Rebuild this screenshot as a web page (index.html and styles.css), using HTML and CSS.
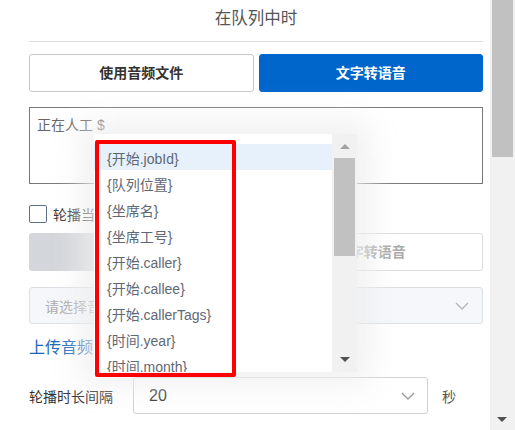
FILE: index.html
```html
<!DOCTYPE html>
<html lang="zh-CN">
<head>
    <meta charset="utf-8">
    <title>在队列中时</title>
    <link rel="stylesheet" href="styles.css">
</head>
<body>
<div class="page">
    <div class="main">
        <div class="title">在队列中时</div>

        <div class="seg">
            <div class="seg-btn">使用音频文件</div>
            <div class="seg-btn active">文字转语音</div>
        </div>

        <div class="text-box">正在人工 $</div>

        <div class="check-row">
            <span class="checkbox"></span>
            <span>轮播当前排队位置</span>
        </div>

        <div class="seg seg-disabled">
            <div class="seg-btn">使用音频文件</div>
            <div class="seg-btn">文字转语音</div>
        </div>

        <div class="select select-disabled">
            <span class="placeholder">请选择音频文件</span>
            <svg class="chevron" viewBox="0 0 14 8" width="14" height="8"><path d="M1 1l6 6 6-6" fill="none" stroke="#b5b5b5" stroke-width="1.3"/></svg>
        </div>

        <div class="link">上传音频文件</div>

        <div class="interval-row">
            <span class="interval-label">轮播时长间隔</span>
            <div class="select interval-select">
                <span class="value">20</span>
                <svg class="chevron" viewBox="0 0 14 8" width="14" height="8"><path d="M1 1l6 6 6-6" fill="none" stroke="#999" stroke-width="1.3"/></svg>
            </div>
            <span class="unit">秒</span>
        </div>

        <!-- variable picker dropdown -->
        <div class="picker">
            <ul class="picker-list">
                <li class="hover">{开始.jobId}</li>
                <li>{队列位置}</li>
                <li>{坐席名}</li>
                <li>{坐席工号}</li>
                <li>{开始.caller}</li>
                <li>{开始.callee}</li>
                <li>{开始.callerTags}</li>
                <li>{时间.year}</li>
                <li>{时间.month}</li>
            </ul>
            <div class="picker-bar">
                <span class="arrow-up light"></span>
                <span class="picker-thumb"></span>
                <span class="arrow-down"></span>
            </div>
        </div>
        <div class="mark"></div>
    </div>

    <div class="scrollbar">
        <span class="thumb"></span>
        <span class="arrow-down"></span>
    </div>
</div>
</body>
</html>
```

FILE: styles.css
```css
body {
    margin: 0;
    font-family: "Liberation Sans", "Noto Sans CJK SC", sans-serif;
    font-size: 14px;
    color: #333;
    background: #fff;
}

.page {
    display: flex;
    height: 430px;
    overflow: hidden;
}

.main {
    position: relative;
    width: 490px;
    box-sizing: border-box;
    padding: 0 7px 0 29px;
}

.title {
    height: 41px;
    line-height: 36px;
    text-align: center;
    font-size: 16.5px;
    color: #555;
    border-bottom: 1px solid #ddd;
}

.seg {
    display: flex;
    gap: 5px;
    margin-top: 12px;
    height: 38px;
}

.seg-btn {
    flex: 1;
    box-sizing: border-box;
    border: 1px solid #c8c8c8;
    border-radius: 3px;
    text-align: center;
    line-height: 36px;
    font-weight: bold;
    color: #333;
}

.seg-btn.active {
    background: #0066cc;
    border-color: #0066cc;
    color: #fff;
}

.seg-disabled {
    margin-top: 10px;
}

.seg-disabled .seg-btn {
    border-color: #dcdcdc;
    color: #aaa;
}

.seg-disabled .seg-btn:first-child {
    background: #d3d6da;
    border-color: #d3d6da;
}

.text-box {
    margin-top: 15px;
    height: 77px;
    box-sizing: border-box;
    border: 1px solid #777;
    padding: 6px 7px;
    color: #666;
}

.check-row {
    display: flex;
    align-items: center;
    gap: 6px;
    margin-top: 21px;
    height: 18px;
}

.checkbox {
    width: 18px;
    height: 18px;
    box-sizing: border-box;
    border: 1px solid #5d6f88;
    border-radius: 2px;
}

.select {
    display: flex;
    align-items: center;
    justify-content: space-between;
    box-sizing: border-box;
    height: 37px;
    border: 1px solid #d0d0d0;
    border-radius: 3px;
    padding: 0 13px 0 15px;
}

.select-disabled {
    margin-top: 16px;
    background: #f5f7fa;
    border-color: #dcdfe3;
}

.placeholder {
    color: #aaa;
}

.link {
    margin-top: 12px;
    line-height: 24px;
    font-size: 16px;
    color: #1a66b8;
}

.interval-row {
    display: flex;
    align-items: center;
    margin-top: 17px;
}

.interval-label {
    width: 104px;
}

.interval-select {
    width: 295px;
    padding-left: 15px;
    padding-right: 12px;
}

.value {
    font-size: 16px;
    color: #333;
}

.unit {
    margin-left: 14px;
    color: #555;
}

.picker {
    position: absolute;
    left: 94px;
    top: 134px;
    width: 263px;
    height: 238px;
    display: flex;
    background: #fff;
    box-shadow: 0 0 30px 12px rgba(238, 238, 238, 0.9);
}

.picker-list {
    flex: 1;
    list-style: none;
    margin: 0;
    padding: 10px 0 0;
    overflow: hidden;
}

.picker-list li {
    height: 26px;
    line-height: 30px;
    padding-left: 13px;
    color: #5f6875;
    white-space: nowrap;
}

.picker-list li.hover {
    background: #e6f1fc;
}

.picker-bar {
    position: relative;
    width: 25px;
    background: #f1f1f1;
}

.picker-thumb {
    position: absolute;
    left: 2px;
    top: 24px;
    width: 21px;
    height: 98px;
    background: #c1c1c1;
}

.arrow-up,
.arrow-down {
    position: absolute;
    left: 8px;
    width: 0;
    height: 0;
    border-left: 5px solid transparent;
    border-right: 5px solid transparent;
}

.arrow-up {
    top: 10px;
    border-bottom: 5px solid #505050;
}

.arrow-up.light {
    border-bottom-color: #a3a3a3;
}

.arrow-down {
    bottom: 10px;
    border-top: 5px solid #505050;
}

.mark {
    position: absolute;
    left: 95px;
    top: 140px;
    width: 141px;
    height: 237px;
    box-sizing: border-box;
    border: 4px solid #ff0000;
    border-radius: 2px;
}

.scrollbar {
    position: relative;
    width: 25px;
    background: #f1f1f1;
}

.scrollbar .thumb {
    position: absolute;
    left: 2px;
    top: 0;
    width: 21px;
    height: 157px;
    background: #c1c1c1;
}

.scrollbar .arrow-down {
    left: 7px;
    bottom: 8px;
}
```
